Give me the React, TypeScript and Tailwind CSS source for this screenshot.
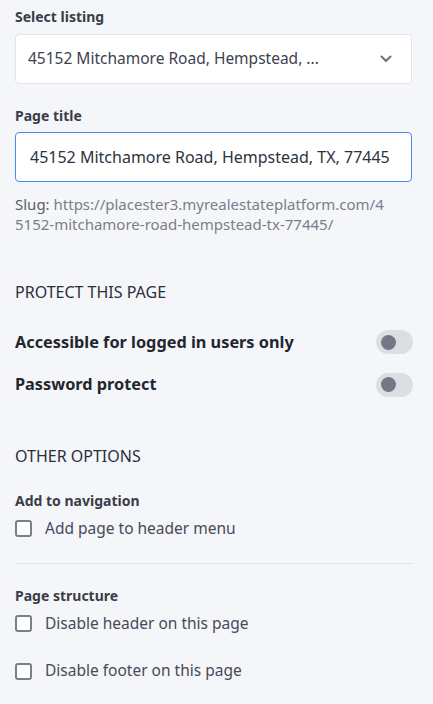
import React from "react";

function Toggle() {
  return (
    <div className="w-[37px] h-[24px] rounded-full bg-[#dcdee3] flex items-center pl-[5px]">
      <div className="w-[15px] h-[15px] rounded-full bg-[#737886]" />
    </div>
  );
}

function Check({ label }: { label: string }) {
  return (
    <label className="flex items-center gap-[13px]">
      <span className="w-[17px] h-[17px] rounded-[3px] border-2 border-[#7b7f8c] bg-white" />
      <span className="text-[15.5px] text-[#464a58]">{label}</span>
    </label>
  );
}

export default function App() {
  return (
    <div
      className="min-h-[704px] bg-[#f5f6fa] px-[15px] pt-[8px] text-[#2b2f3a]"
      style={{ fontFamily: '"Noto Sans", "Open Sans", sans-serif' }}
    >
      <div className="text-[14px] font-bold text-[#3a3d47] leading-[18px]">Select listing</div>
      <div className="mt-[8px] h-[50px] w-[397px] rounded-[4px] border border-[#e2e4ea] bg-white flex items-center justify-between pl-[12px] pr-[19px]">
        <span className="text-[15.5px] text-[#3d4150]">45152 Mitchamore Road, Hempstead, ...</span>
        <svg width="12" height="8" viewBox="0 0 12 8" fill="none">
          <path d="M1.5 1.5 L6 6 L10.5 1.5" stroke="#6b7080" strokeWidth="2" strokeLinecap="round" strokeLinejoin="round" />
        </svg>
      </div>

      <div className="mt-[23px] text-[14px] font-bold text-[#3a3d47] leading-[18px]">Page title</div>
      <div className="mt-[7px] h-[50px] w-[397px] rounded-[4px] border border-[#4a87f0] bg-white flex items-center pl-[14px]">
        <span className="text-[16px] text-[#2e3240]">45152 Mitchamore Road, Hempstead, TX, 77445</span>
      </div>
      <div className="mt-[12px] text-[15px] leading-[20px] text-[#7a7e8a] w-[397px]">
        <span className="text-[#5b5f6b]">Slug: </span>https://placester3.myrealestateplatform.com/4
        <br />
        5152-mitchamore-road-hempstead-tx-77445/
      </div>

      <div className="mt-[48px] text-[16px] text-[#2b2f3a] leading-[20px]">PROTECT THIS PAGE</div>
      <div className="mt-[28px] flex items-center justify-between w-[398px]">
        <span className="text-[16.3px] font-bold text-[#23262f]">Accessible for logged in users only</span>
        <Toggle />
      </div>
      <div className="mt-[18px] flex items-center justify-between w-[398px]">
        <span className="text-[16.3px] font-bold text-[#23262f]">Password protect</span>
        <Toggle />
      </div>

      <div className="mt-[49px] text-[16px] text-[#2b2f3a] leading-[20px]">OTHER OPTIONS</div>
      <div className="mt-[26px] text-[14px] font-bold text-[#3a3d47] leading-[18px]">Add to navigation</div>
      <div className="mt-[7px]">
        <Check label="Add page to header menu" />
      </div>
      <div className="mt-[23px] h-px w-[397px] bg-[#e1e3e8]" />
      <div className="mt-[23px] text-[14px] font-bold text-[#3a3d47] leading-[18px]">Page structure</div>
      <div className="mt-[7px]">
        <Check label="Disable header on this page" />
      </div>
      <div className="mt-[24px]">
        <Check label="Disable footer on this page" />
      </div>
    </div>
  );
}
